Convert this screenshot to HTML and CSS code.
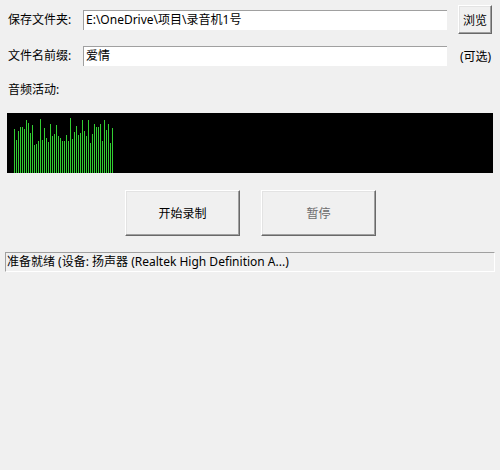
FILE: index.html
```html
<!DOCTYPE html>
<html lang="zh-CN">
<head>
<meta charset="utf-8">
<link rel="stylesheet" href="styles.css">
</head>
<body>
<div class="app">
  <div class="row row-folder">
    <span class="label">保存文件夹:</span>
    <div class="input">E:\OneDrive\项目\录音机1号</div>
    <button class="btn btn-browse">浏览</button>
  </div>
  <div class="row row-prefix">
    <span class="label">文件名前缀:</span>
    <div class="input">爱情</div>
    <span class="hint">(可选)</span>
  </div>
  <div class="row row-audio">
    <span class="label">音频活动:</span>
  </div>
  <div class="meter">
    <i style="height:44px"></i><i style="height:33px"></i><i style="height:42px"></i><i style="height:46px"></i><i style="height:46px"></i><i style="height:44px"></i><i style="height:53px"></i><i style="height:50px"></i><i style="height:40px"></i><i style="height:48px"></i><i style="height:28px"></i><i style="height:29px"></i><i style="height:32px"></i><i style="height:54px"></i><i style="height:33px"></i><i style="height:45px"></i><i style="height:35px"></i><i style="height:31px"></i><i style="height:49px"></i><i style="height:37px"></i><i style="height:39px"></i><i style="height:48px"></i><i style="height:37px"></i><i style="height:35px"></i><i style="height:32px"></i><i style="height:32px"></i><i style="height:38px"></i><i style="height:32px"></i><i style="height:55px"></i><i style="height:34px"></i><i style="height:41px"></i><i style="height:47px"></i><i style="height:38px"></i><i style="height:40px"></i><i style="height:53px"></i><i style="height:42px"></i><i style="height:37px"></i><i style="height:53px"></i><i style="height:30px"></i><i style="height:39px"></i><i style="height:49px"></i><i style="height:46px"></i><i style="height:46px"></i><i style="height:49px"></i><i style="height:32px"></i><i style="height:53px"></i><i style="height:43px"></i><i style="height:49px"></i><i style="height:30px"></i><i style="height:45px"></i>
  </div>
  <div class="actions">
    <button class="btn btn-big">开始录制</button>
    <button class="btn btn-big disabled">暂停</button>
  </div>
  <div class="status">准备就绪 (设备: 扬声器 (Realtek High Definition A...)</div>
</div>
</body>
</html>
```

FILE: styles.css
```css
html, body {
  margin: 0;
  padding: 0;
  background: #f0f0f0;
}
body {
  width: 500px;
  height: 470px;
  font-family: "Noto Sans", "Noto Sans CJK SC", sans-serif;
  font-size: 12px;
  color: #000;
}
.app {
  display: flex;
  flex-direction: column;
}
.row {
  display: flex;
  align-items: center;
  padding-left: 8px;
}
.label {
  width: 75px;
  flex: none;
  white-space: nowrap;
  line-height: 16px;
}
.row-folder {
  margin-top: 5px;
  height: 29px;
}
.row-prefix {
  margin-top: 12px;
  height: 20px;
}
.row-audio {
  margin-top: 14px;
  height: 20px;
}
.input {
  box-sizing: border-box;
  width: 364px;
  height: 20px;
  background: #fff;
  border-top: 1px solid #a0a0a0;
  border-left: 1px solid #a0a0a0;
  padding: 0 2px;
  line-height: 18px;
  white-space: nowrap;
  overflow: hidden;
}
.btn {
  box-sizing: border-box;
  font-family: inherit;
  font-size: 12px;
  color: #000;
  background: #f0f0f0;
  border: none;
  border-top: 1px solid #fff;
  border-left: 1px solid #fff;
  border-right: 1px solid #696969;
  border-bottom: 1px solid #696969;
  box-shadow: inset -1px -1px 0 #a0a0a0, inset 1px 1px 0 #e3e3e3;
  padding: 0;
  margin: 0;
}
.btn-browse {
  width: 34px;
  height: 29px;
  margin-left: 11px;
}
.hint {
  margin-left: 13px;
  white-space: nowrap;
}
.meter {
  margin: 13px 7px 0 7px;
  height: 60px;
  background: #000;
  display: flex;
  align-items: flex-end;
  gap: 1px;
  padding-left: 7px;
}
.meter i {
  display: block;
  width: 1px;
  background: #32cd32;
}
.actions {
  display: flex;
  margin-top: 17px;
  padding-left: 125px;
  gap: 21px;
}
.btn-big {
  width: 115px;
  height: 46px;
}
.btn-big.disabled {
  color: #6d6d6d;
}
.status {
  box-sizing: border-box;
  margin: 16px 5px 0 5px;
  height: 20px;
  border-top: 1px solid #a0a0a0;
  border-left: 1px solid #a0a0a0;
  border-right: 1px solid #fff;
  border-bottom: 1px solid #fff;
  padding-left: 1px;
  line-height: 18px;
  white-space: nowrap;
}
```
